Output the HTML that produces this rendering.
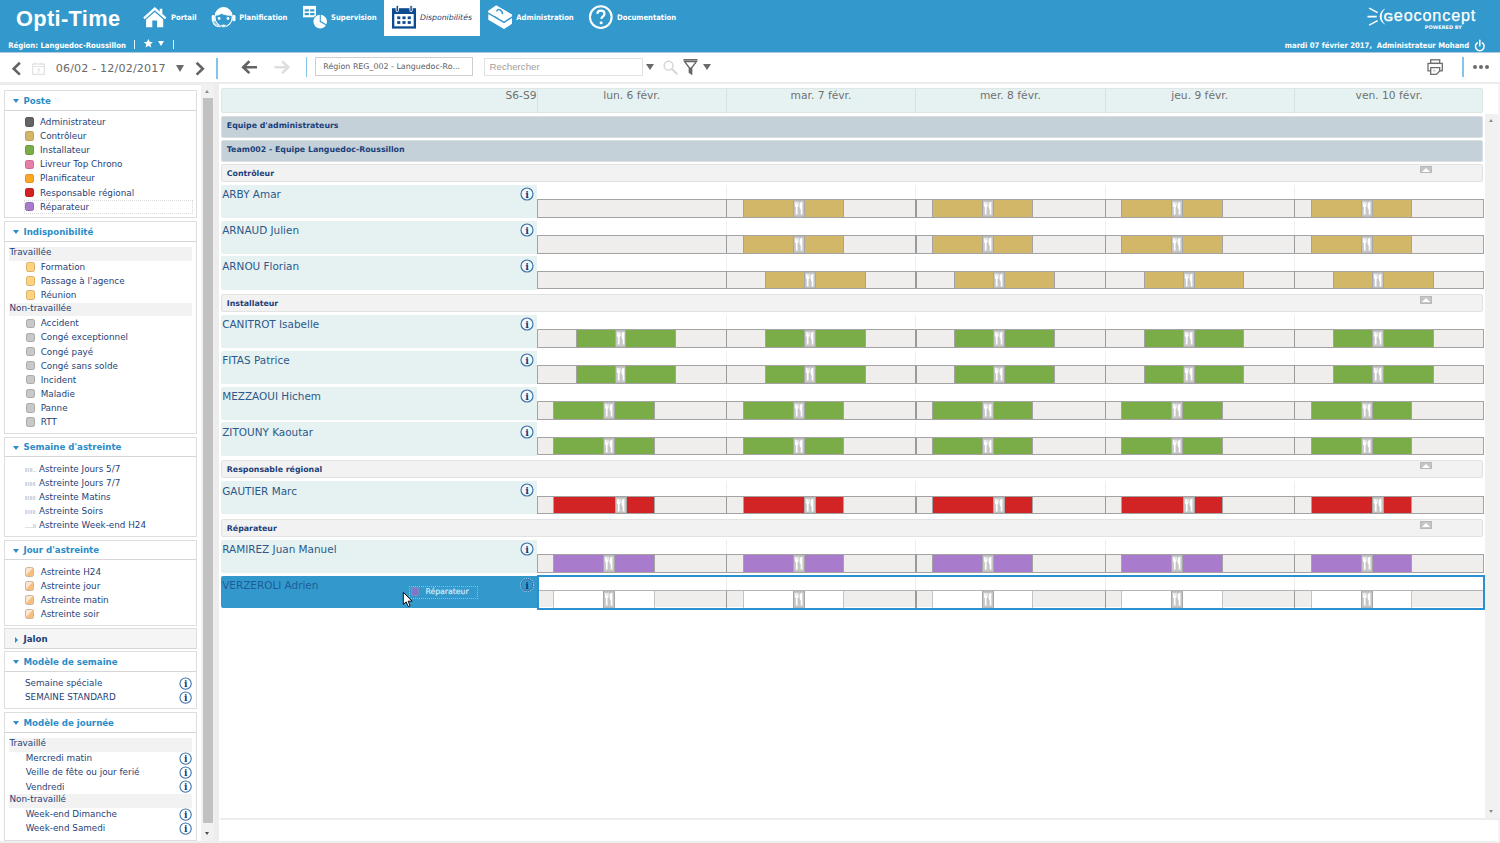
<!DOCTYPE html><html lang="fr"><head><meta charset="utf-8"><title>Opti-Time - Disponibilités</title><style>
*{box-sizing:border-box;margin:0;padding:0}
html,body{width:1500px;height:843px;overflow:hidden;background:#fff}
body{position:relative;font-family:"DejaVu Sans","Liberation Sans",sans-serif;color:#1f3f77}
.abs,.abs *{position:absolute}
div,span,svg,b,i{position:absolute;white-space:pre}
#hdr{left:0;top:0;width:1500px;height:52px;background:#3399cc}
.nav{color:#fff;font-family:'DejaVu Sans Condensed','DejaVu Sans',sans-serif;font-weight:700;font-size:7.62px;line-height:10px;top:12.6px}
.tb{left:0;top:52px;width:1500px;height:31px;background:#fff}
.sep{width:2px;height:21px;top:58px;background:#7fbde0}
.ph{left:4.2px;width:193.1px;height:20.8px;background:#fff;border:1px solid #dedede;border-bottom:1.5px solid #d6d6d6}
.ph b{left:18.3px;top:4.9px;font-size:8.65px;line-height:11px;color:#2b8cc8;font-weight:700}
.ph i{left:8px;top:8px;width:0;height:0;border-left:3px solid transparent;border-right:3px solid transparent;border-top:4px solid #2b8cc8}
.pl{left:4.2px;width:193.1px;background:#fff;border:1px solid #dedede;border-top:0}
.it{left:40px;font-size:8.8px;line-height:12px;color:#1f3f77}
.sw{left:25px;width:8.5px;height:9.6px;border-radius:2.2px}
.band{left:9px;width:183.3px;height:13.7px;background:#f2f2f2}
.band span{left:0.5px;top:-0.6px;font-size:8.8px;line-height:12px;color:#1f3f77}
.grp{left:221.3px;width:1262px;background:#c4d1d9;border-radius:2px;border:1px solid #d9dfe3}
.grp span,.sub span{left:4.5px;font-weight:700;font-size:7.85px;line-height:10px;color:#1c3f7a}
.sub{left:221.3px;width:1262px;height:17.6px;background:#f2f2f2;border:1px solid #e2e2e2;border-radius:2px}
.nm{left:221.2px;width:315.8px;height:33.4px;background:#e6f2f2;border-radius:2px 0 0 2px}
.nm span{left:1px;top:3.7px;font-size:10.45px;line-height:13px;color:#2c588a}
.rw{left:537px;width:947px;height:33.1px;background:#fff}
.dl{width:1px;background:#eeeeee;top:0;height:33.1px}
.bar{left:0;top:14.8px;height:18.4px;width:947px;background:#efeeed;border:1px solid #a3a3a3}
.wk{top:0;height:16.4px;border-left:1px solid #a3a3a3;border-right:1px solid #a3a3a3}
.dv{top:0;height:16.4px;width:1px;background:#a3a3a3}
.dv2{top:0;height:16.4px;width:1.3px;background:#9a9a9a}
.ln{top:0;height:16.4px;background:#c6c6c6;border-left:1.1px solid #a6a6a6;border-right:1.1px solid #a6a6a6;box-shadow:inset 0 1px 0 #bcbcbc,inset 0 -1px 0 #bcbcbc}
</style></head><body>
<div id="hdr">
<span style="left:16px;top:5.5px;font-family:'Liberation Sans',sans-serif;font-size:21.8px;line-height:26px;color:#fff;font-weight:700;letter-spacing:0.35px">Opti-Time</span>
<div style="left:384px;top:0;width:96px;height:35.7px;background:#fff"></div>
<span class="nav" style="left:171px">Portail</span>
<span class="nav" style="left:239.2px">Planification</span>
<span class="nav" style="left:331px">Supervision</span>
<span class="nav" style="left:516.3px">Administration</span>
<span class="nav" style="left:617px">Documentation</span>
<span class="nav" style="left:420px;color:#1c3f7a;font-family:DejaVu Sans,sans-serif;font-style:italic;font-weight:400;font-size:7.73px">Disponibilités</span>
<svg style="left:142px;top:6px" width="26" height="23" viewBox="142 6 26 23"><path d="M154.800 7.100l-11.600 10.300 1.550 1.750 10.050-8.900 10.050 8.900 1.550-1.750-4.100-3.600v-5.100h-2.600v2.800z" fill="#fff"/><path d="M154.800 11.900l-8.700 7.700v7.700h6.200v-6.900h4.800v6.900h6.100v-7.700z" fill="#fff"/></svg>
<svg style="left:210px;top:5px" width="28" height="25" viewBox="210 5 28 25"><ellipse cx="223.6" cy="17.150" rx="8.650" ry="9.600" fill="none" stroke="#fff" stroke-width="1.150"/><path d="M215.100 15.600A8.650 9.600 0 0 1 232.100 15.600C228.500 15.500 224.500 14.900 221.600 13.500C219.500 14.700 217.300 15.400 215.100 15.600Z" fill="#fff" stroke="#fff" stroke-width="0.600"/><circle cx="219.150" cy="18.500" r="1.400" fill="#fff"/><circle cx="228" cy="18.500" r="1.400" fill="#fff"/><rect x="211.700" y="15.100" width="3.100" height="6.200" rx="1.400" fill="#fff"/><rect x="232.400" y="15.100" width="3.100" height="6.200" rx="1.400" fill="#fff"/><path d="M213.200 20.800C213.700 24.300 216.800 26.300 221.300 26.300" fill="none" stroke="#fff" stroke-width="2.100"/><path d="M213.400 21.500C214.100 24.300 216.900 26 221 26.100" fill="none" stroke="#3399cc" stroke-width="0.450"/><ellipse cx="223.500" cy="25.800" rx="2.800" ry="1.500" fill="#fff" stroke="#3399cc" stroke-width="0.700"/></svg>
<svg style="left:302px;top:5px" width="28" height="25" viewBox="302 5 28 25"><rect x="303" y="5.900" width="13" height="11.400" fill="#fff"/><g fill="#3399cc"><rect x="304.7" y="9.300" width="4.200" height="2.200"/><rect x="310.200" y="9.300" width="4.200" height="2.200"/><rect x="304.7" y="13" width="4.200" height="2.200"/><rect x="310.200" y="13" width="4.200" height="2.200"/></g><circle cx="320.2" cy="21.600" r="7.500" fill="#3399cc"/><circle cx="320.2" cy="21.600" r="6.800" fill="#fff"/><path d="M320.3 14.500v7.100l6.200 3.300" fill="none" stroke="#3399cc" stroke-width="1.100"/></svg>
<svg style="left:391px;top:5px" width="26" height="25" viewBox="391 5 26 25"><rect x="392" y="8.200" width="24" height="20.400" fill="#0d4b8f"/><rect x="394.300" y="14" width="19.400" height="12.300" fill="#fff"/><g fill="#0d4b8f"><rect x="397.200" y="16.400" width="3.100" height="2.800"/><rect x="402.450" y="16.400" width="3.100" height="2.800"/><rect x="407.700" y="16.400" width="3.100" height="2.800"/><rect x="397.200" y="21.100" width="3.100" height="2.800"/><rect x="402.450" y="21.100" width="3.100" height="2.800"/><rect x="407.700" y="21.100" width="3.100" height="2.800"/></g><g fill="#0d4b8f" stroke="#fff" stroke-width="0.900"><rect x="396.100" y="5.400" width="2.400" height="6.200" rx="1.200"/><rect x="409.900" y="5.400" width="2.400" height="6.200" rx="1.200"/></g></svg>
<svg style="left:487px;top:4px" width="27" height="27" viewBox="487 4 27 27"><path d="M488 10.900l8.200-5.600 15.900 9.300v1.600l-8.100 5.400-16-9.400z" fill="#fff"/><path d="M488.300 14l15.700 9.300 8-5.300v5.800l-8 5.300-15.700-9.300z" fill="#fff"/><path d="M496.700 11.500c.3-1.900 1.700-2.500 3.300-1.600 1.600 1 2.700 2.500 2.400 4.200" fill="none" stroke="#3399cc" stroke-width="1.500"/><path d="M495 16.500l1.500 1 1.300-.3" fill="none" stroke="#3399cc" stroke-width="0.800"/></svg>
<svg style="left:588px;top:4px" width="26" height="26" viewBox="588 4 26 26"><circle cx="600.8" cy="17.100" r="10.850" fill="none" stroke="#fff" stroke-width="2.100"/><path d="M597.300 13.900c.1-2 1.500-3.300 3.600-3.300 2.100 0 3.600 1.300 3.600 3.100 0 1.400-.7 2.200-1.800 3-1 .7-1.300 1.200-1.300 2.400" fill="none" stroke="#fff" stroke-width="2.200"/><circle cx="601.200" cy="22.800" r="1.550" fill="#fff"/></svg>
<span style="left:8.2px;top:40.6px;font-family:DejaVu Sans Condensed,DejaVu Sans,sans-serif;font-size:7.71px;line-height:10px;font-weight:700;color:#fff">Région: Languedoc-Roussillon</span>
<div style="left:133.8px;top:40px;width:1px;height:8.600px;background:#e6f2fa"></div><div style="left:173.4px;top:40px;width:1px;height:8.600px;background:#e6f2fa"></div>
<svg style="left:143px;top:38px" width="11" height="11" viewBox="143 38 11 11"><path d="M148.4 38.900l1.350 2.900 3.100.35-2.300 2.150.65 3.100-2.800-1.600-2.800 1.600.65-3.100-2.300-2.150 3.100-.35z" fill="#fff"/></svg>
<div style="left:158px;top:41.300px;width:0;height:0;border-left:3.100px solid transparent;border-right:3.100px solid transparent;border-top:5.200px solid #fff"></div>
<span style="left:1284.8px;top:40.700px;font-family:DejaVu Sans Condensed,DejaVu Sans,sans-serif;font-size:7.68px;line-height:10px;font-weight:700;color:#fff">mardi 07 février 2017,  Administrateur Mohand</span>
<svg style="left:1366px;top:6px" width="22" height="22" viewBox="1366 6 22 22"><path d="M1369.200 8.100l8.400 4.500M1367.500 16.600h9.200M1369.200 25.100l8.400-4.500" stroke="#fff" stroke-width="1.600" fill="none"/><path d="M1385.700 8.300c-8 3.500-8 13 0 16.500-5.300-4.300-5.300-12.200 0-16.500z" fill="#fff"/></svg>
<span style="left:1383.800px;top:5.200px;font-family:'Liberation Sans',sans-serif;font-size:16.2px;line-height:20px;color:#fff;letter-spacing:0.85px;-webkit-text-stroke:0.25px #fff"><span style="position:static;font-size:11.8px;-webkit-text-stroke:0.6px #fff">G</span>eoconcept</span>
<span style="left:1424.8px;top:24.3px;font-size:4.95px;line-height:7px;font-weight:700;color:#fff;letter-spacing:0.05px">POWERED BY</span>
<svg style="left:1473px;top:38px" width="14" height="15" viewBox="1473 38 14 15"><path d="M1477.300 42.900a4.300 4.300 0 1 0 5 0" fill="none" stroke="#fff" stroke-width="1.500" stroke-linecap="round"/><path d="M1479.800 40.200v5.600" stroke="#fff" stroke-width="1.500" stroke-linecap="round"/></svg>
</div>
<div class="tb" style="height:30px">
<div style="left:0;top:0;width:1500px;height:1px;background:linear-gradient(#7fb0d0,#d5e3ec)"></div>
<svg style="left:10px;top:8px" width="13" height="17" viewBox="10 60 13 17"><path d="M19.900 62.800l-6.200 5.900 6.200 5.900" fill="none" stroke="#646464" stroke-width="2.600"/></svg>
<svg style="left:194px;top:8px" width="13" height="17" viewBox="194 60 13 17"><path d="M196.600 62.800l6.200 5.900-6.200 5.900" fill="none" stroke="#646464" stroke-width="2.600"/></svg>
<svg style="left:31px;top:9px" width="15" height="15" viewBox="31 61 15 15"><rect x="32.800" y="64" width="11.400" height="10.300" fill="#fff" stroke="#dadada" stroke-width="1"/><path d="M32.800 66.500h11.400" stroke="#e2e2e2" stroke-width="1"/><path d="M35.300 62.600v2M41.700 62.600v2" stroke="#dadada" stroke-width="1"/><text x="38.500" y="73" text-anchor="middle" font-family="DejaVu Sans,sans-serif" font-size="6" fill="#cfcfcf">7</text></svg>
<span style="left:55.700px;top:9.800px;font-size:11.1px;line-height:14px;letter-spacing:0.17px;color:#6a6a6a">06/02 - 12/02/2017</span>
<div style="left:175.8px;top:12.900000000000006px;width:0;height:0;border-left:4.8px solid transparent;border-right:4.8px solid transparent;border-top:7.4px solid #6a6a6a"></div>
<div style="left:645.9px;top:11.600000000000001px;width:0;height:0;border-left:4.6px solid transparent;border-right:4.6px solid transparent;border-top:6.9px solid #6a6a6a"></div>
<div style="left:702.8px;top:11.600000000000001px;width:0;height:0;border-left:4.6px solid transparent;border-right:4.6px solid transparent;border-top:6.9px solid #6a6a6a"></div>
<div style="left:216.300px;top:6.400px;width:1.300px;height:20.300px;background:#86c3ea"></div><div style="left:305.900px;top:5px;width:1.500px;height:20px;background:#86c3ea"></div><div style="left:1462px;top:5.100px;width:1.500px;height:19.800px;background:#86c3ea"></div>
<svg style="left:240px;top:7px" width="19" height="16" viewBox="240 59 19 16"><path d="M257 67.200h-13.600M249.400 61.300l-6.200 5.900 6.200 5.900" fill="none" stroke="#646464" stroke-width="2.600"/></svg>
<svg style="left:273px;top:7px" width="19" height="16" viewBox="273 59 19 16"><path d="M274.500 67.200h13.600M282.100 61.300l6.200 5.900-6.200 5.900" fill="none" stroke="#dedede" stroke-width="2.600"/></svg>
<div style="left:315.300px;top:5.100px;width:158px;height:19.300px;border:1px solid #cfcfcf;background:#fff"><span style="left:7px;top:3.800px;font-size:7.92px;line-height:10px;color:#5e5e5e">Région REG_002 - Languedoc-Ro...</span></div>
<div style="left:484.300px;top:6.300px;width:158.500px;height:18.200px;border:1px solid #e2e2e2;background:#fff"><span style="left:4.300px;top:1.100px;font-family:'Liberation Sans',sans-serif;font-size:9.7px;line-height:13px;color:#a0a0a0">Rechercher</span></div>
<svg style="left:662px;top:7px" width="17" height="17" viewBox="662 59 17 17"><circle cx="668.600" cy="65.700" r="4.400" fill="none" stroke="#d6d6d6" stroke-width="1.500"/><path d="M671.900 69l5 4.700" stroke="#d6d6d6" stroke-width="2" stroke-linecap="round"/></svg>
<svg style="left:682px;top:6px" width="17" height="18" viewBox="682 58 17 18"><path d="M683.500 59.800h14" stroke="#646464" stroke-width="1.500"/><path d="M684.500 61.500h12l-4.800 6.300v6.200l-2.400-1.500v-4.700z" fill="none" stroke="#646464" stroke-width="1.300"/><path d="M689.300 67.500h2.400v6.500l-2.400-1.500z" fill="#646464"/></svg>
<svg style="left:1426px;top:6px" width="19" height="19" viewBox="1426 58 19 19"><g fill="#fff" stroke="#6e6e6e" stroke-width="1.300"><rect x="1430.700" y="59.800" width="9" height="3.600"/><rect x="1428" y="63.400" width="14.300" height="7.400"/><path d="M1430.700 67.700h9v3.300l-3.300 3.400h-5.700z"/></g><path d="M1433 70.800h2.500" stroke="#9a9a9a" stroke-width="0.800"/></svg>
<div style="left:1473.3px;top:13.099999999999994px;width:4px;height:4px;border-radius:2px;background:#6c6c6c"></div>
<div style="left:1479.2px;top:13.099999999999994px;width:4px;height:4px;border-radius:2px;background:#6c6c6c"></div>
<div style="left:1485.1px;top:13.099999999999994px;width:4px;height:4px;border-radius:2px;background:#6c6c6c"></div>
</div>
<div style="left:0;top:82px;width:1500px;height:2.500px;background:#ececec"></div>
<div class="ph" style="top:89.9px"><i></i><b>Poste</b></div>
<div class="pl" style="top:110.7px;height:107.6px"></div>
<div class="sw" style="left:25px;top:117.3px;background:#646464;border:1px solid #555"></div>
<span class="it" style="left:40px;top:116.2px">Administrateur</span>
<div class="sw" style="left:25px;top:131.37px;background:#d2b768;border:1px solid #b9a05a"></div>
<span class="it" style="left:40px;top:130.27px">Contrôleur</span>
<div class="sw" style="left:25px;top:145.44px;background:#7aac47;border:1px solid #6c983f"></div>
<span class="it" style="left:40px;top:144.34px">Installateur</span>
<div class="sw" style="left:25px;top:159.51px;background:#e87ea8;border:1px solid #cc6f94"></div>
<span class="it" style="left:40px;top:158.41px">Livreur Top Chrono</span>
<div class="sw" style="left:25px;top:173.57999999999998px;background:#ffa722;border:1px solid #e0931e"></div>
<span class="it" style="left:40px;top:172.48px">Planificateur</span>
<div class="sw" style="left:25px;top:187.64999999999998px;background:#d42222;border:1px solid #b91e1e"></div>
<span class="it" style="left:40px;top:186.54999999999998px">Responsable régional</span>
<div class="sw" style="left:25px;top:201.72px;background:#a97bcc;border:1px solid #956cb4"></div>
<span class="it" style="left:40px;top:200.62px">Réparateur</span>
<div style="left:24px;top:200px;width:168.5px;height:13.5px;border:1px dotted #dadada"></div>
<div class="ph" style="top:221.3px"><i></i><b>Indisponibilité</b></div>
<div class="pl" style="top:242.1px;height:192.1px"></div>
<div class="band" style="top:247px"><span>Travaillée</span></div>
<div class="sw" style="left:26px;top:262.3px;background:#ffd27f;border:1px solid #d9b36c"></div>
<span class="it" style="left:40.7px;top:261.2px">Formation</span>
<div class="sw" style="left:26px;top:276.35px;background:#ffd27f;border:1px solid #d9b36c"></div>
<span class="it" style="left:40.7px;top:275.25px">Passage à l&#x27;agence</span>
<div class="sw" style="left:26px;top:290.40000000000003px;background:#ffd27f;border:1px solid #d9b36c"></div>
<span class="it" style="left:40.7px;top:289.3px">Réunion</span>
<div class="band" style="top:302.5px"><span>Non-travaillée</span></div>
<div class="sw" style="left:26px;top:318.5px;background:#c8c8c8;border:1px solid #aaaaaa"></div>
<span class="it" style="left:40.7px;top:317.4px">Accident</span>
<div class="sw" style="left:26px;top:332.57px;background:#c8c8c8;border:1px solid #aaaaaa"></div>
<span class="it" style="left:40.7px;top:331.46999999999997px">Congé exceptionnel</span>
<div class="sw" style="left:26px;top:346.64px;background:#c8c8c8;border:1px solid #aaaaaa"></div>
<span class="it" style="left:40.7px;top:345.53999999999996px">Congé payé</span>
<div class="sw" style="left:26px;top:360.71px;background:#c8c8c8;border:1px solid #aaaaaa"></div>
<span class="it" style="left:40.7px;top:359.60999999999996px">Congé sans solde</span>
<div class="sw" style="left:26px;top:374.78px;background:#c8c8c8;border:1px solid #aaaaaa"></div>
<span class="it" style="left:40.7px;top:373.67999999999995px">Incident</span>
<div class="sw" style="left:26px;top:388.85px;background:#c8c8c8;border:1px solid #aaaaaa"></div>
<span class="it" style="left:40.7px;top:387.75px">Maladie</span>
<div class="sw" style="left:26px;top:402.92px;background:#c8c8c8;border:1px solid #aaaaaa"></div>
<span class="it" style="left:40.7px;top:401.82px">Panne</span>
<div class="sw" style="left:26px;top:416.99px;background:#c8c8c8;border:1px solid #aaaaaa"></div>
<span class="it" style="left:40.7px;top:415.89px">RTT</span>
<div class="ph" style="top:436.5px"><i></i><b>Semaine d'astreinte</b></div>
<div class="pl" style="top:457.3px;height:79.8px"></div>
<span class="it" style="left:39px;top:462.9px">Astreinte Jours 5/7</span>
<div style="left:25.2px;top:467.8px;width:7.6px;height:4.1px;background:repeating-linear-gradient(90deg,#d5d9e3 0 1.700px,#eceef3 1.700px 2.700px)"></div>
<div style="left:33px;top:470.9px;width:3px;height:1px;background:#dcdfe8"></div>
<span class="it" style="left:39px;top:476.91999999999996px">Astreinte Jours 7/7</span>
<div style="left:25.2px;top:481.82px;width:10.8px;height:4.1px;background:repeating-linear-gradient(90deg,#d5d9e3 0 1.700px,#eceef3 1.700px 2.700px)"></div>
<span class="it" style="left:39px;top:490.94px">Astreinte Matins</span>
<div style="left:25.2px;top:495.84000000000003px;width:10.8px;height:4.1px;background:repeating-linear-gradient(90deg,#d5d9e3 0 1.700px,#eceef3 1.700px 2.700px)"></div>
<span class="it" style="left:39px;top:504.96px">Astreinte Soirs</span>
<div style="left:25.2px;top:509.86px;width:10.8px;height:4.1px;background:repeating-linear-gradient(90deg,#d5d9e3 0 1.700px,#eceef3 1.700px 2.700px)"></div>
<span class="it" style="left:39px;top:518.98px">Astreinte Week-end H24</span>
<div style="left:25.2px;top:527.1800000000001px;width:8px;height:1px;background:#dfe3ea"></div><div style="left:33.2px;top:524.08px;width:2.8px;height:4.4px;background:linear-gradient(90deg,#d4d8e0 0 45%,#e6e8ee 45% 60%,#d4d8e0 60%)"></div>
<div class="ph" style="top:539.6px"><i></i><b>Jour d'astreinte</b></div>
<div class="pl" style="top:560.4px;height:65.9px"></div>
<div class="sw" style="left:25.1px;top:566.5px;height:10px;width:8.6px;background:linear-gradient(135deg,#fbe6d0 0%,#fbe6d0 44%,#f9bd7e 50%,#f9bd7e 100%);border:1px solid #c9b5a0"></div>
<span class="it" style="left:40.7px;top:565.6999999999999px">Astreinte H24</span>
<div class="sw" style="left:25.1px;top:580.57px;height:10px;width:8.6px;background:linear-gradient(135deg,#fbe6d0 0%,#fbe6d0 44%,#f9bd7e 50%,#f9bd7e 100%);border:1px solid #c9b5a0"></div>
<span class="it" style="left:40.7px;top:579.77px">Astreinte jour</span>
<div class="sw" style="left:25.1px;top:594.64px;height:10px;width:8.6px;background:linear-gradient(135deg,#fbe6d0 0%,#fbe6d0 44%,#f9bd7e 50%,#f9bd7e 100%);border:1px solid #c9b5a0"></div>
<span class="it" style="left:40.7px;top:593.8399999999999px">Astreinte matin</span>
<div class="sw" style="left:25.1px;top:608.71px;height:10px;width:8.6px;background:linear-gradient(135deg,#fbe6d0 0%,#fbe6d0 44%,#f9bd7e 50%,#f9bd7e 100%);border:1px solid #c9b5a0"></div>
<span class="it" style="left:40.7px;top:607.91px">Astreinte soir</span>
<div class="ph" style="top:628.3px;background:#f5f5f5"><i style="border:0;border-top:3px solid transparent;border-bottom:3px solid transparent;border-left:3.600px solid #2b8cc8;left:10.300px;top:7.300px"></i><b style="color:#1c3f7a">Jalon</b></div>
<div class="ph" style="top:651.2px"><i></i><b>Modèle de semaine</b></div>
<div class="pl" style="top:672px;height:36.9px"></div>
<span class="it" style="left:25px;top:677.1999999999999px">Semaine spéciale</span>
<svg style="left:178.70000000000002px;top:677.0999999999999px" width="13.2" height="13.2" viewBox="0 0 14 14"><circle cx="7" cy="7" r="6" fill="rgba(255,255,255,0.45)" stroke="#3a6fa9" stroke-width="1.15"/><text x="7" y="10.75" text-anchor="middle" font-family="DejaVu Serif,Liberation Serif,serif" font-weight="700" font-size="9.6" fill="#0f3c7d">i</text></svg>
<span class="it" style="left:25px;top:691.2499999999999px">SEMAINE STANDARD</span>
<svg style="left:178.70000000000002px;top:691.1499999999999px" width="13.2" height="13.2" viewBox="0 0 14 14"><circle cx="7" cy="7" r="6" fill="rgba(255,255,255,0.45)" stroke="#3a6fa9" stroke-width="1.15"/><text x="7" y="10.75" text-anchor="middle" font-family="DejaVu Serif,Liberation Serif,serif" font-weight="700" font-size="9.6" fill="#0f3c7d">i</text></svg>
<div class="ph" style="top:712.4px"><i></i><b>Modèle de journée</b></div>
<div class="pl" style="top:733.2px;height:108px"></div>
<div class="band" style="top:738px"><span>Travaillé</span></div>
<span class="it" style="left:25.7px;top:752.4px">Mercredi matin</span>
<svg style="left:178.70000000000002px;top:752.1px" width="13.2" height="13.2" viewBox="0 0 14 14"><circle cx="7" cy="7" r="6" fill="rgba(255,255,255,0.45)" stroke="#3a6fa9" stroke-width="1.15"/><text x="7" y="10.75" text-anchor="middle" font-family="DejaVu Serif,Liberation Serif,serif" font-weight="700" font-size="9.6" fill="#0f3c7d">i</text></svg>
<span class="it" style="left:25.7px;top:766.4499999999999px">Veille de fête ou jour ferié</span>
<svg style="left:178.70000000000002px;top:766.15px" width="13.2" height="13.2" viewBox="0 0 14 14"><circle cx="7" cy="7" r="6" fill="rgba(255,255,255,0.45)" stroke="#3a6fa9" stroke-width="1.15"/><text x="7" y="10.75" text-anchor="middle" font-family="DejaVu Serif,Liberation Serif,serif" font-weight="700" font-size="9.6" fill="#0f3c7d">i</text></svg>
<span class="it" style="left:25.7px;top:780.5px">Vendredi</span>
<svg style="left:178.70000000000002px;top:780.2px" width="13.2" height="13.2" viewBox="0 0 14 14"><circle cx="7" cy="7" r="6" fill="rgba(255,255,255,0.45)" stroke="#3a6fa9" stroke-width="1.15"/><text x="7" y="10.75" text-anchor="middle" font-family="DejaVu Serif,Liberation Serif,serif" font-weight="700" font-size="9.6" fill="#0f3c7d">i</text></svg>
<div class="band" style="top:794px"><span>Non-travaillé</span></div>
<span class="it" style="left:25.7px;top:808.4px">Week-end Dimanche</span>
<svg style="left:178.70000000000002px;top:808.1px" width="13.2" height="13.2" viewBox="0 0 14 14"><circle cx="7" cy="7" r="6" fill="rgba(255,255,255,0.45)" stroke="#3a6fa9" stroke-width="1.15"/><text x="7" y="10.75" text-anchor="middle" font-family="DejaVu Serif,Liberation Serif,serif" font-weight="700" font-size="9.6" fill="#0f3c7d">i</text></svg>
<span class="it" style="left:25.7px;top:822.4499999999999px">Week-end Samedi</span>
<svg style="left:178.70000000000002px;top:822.15px" width="13.2" height="13.2" viewBox="0 0 14 14"><circle cx="7" cy="7" r="6" fill="rgba(255,255,255,0.45)" stroke="#3a6fa9" stroke-width="1.15"/><text x="7" y="10.75" text-anchor="middle" font-family="DejaVu Serif,Liberation Serif,serif" font-weight="700" font-size="9.6" fill="#0f3c7d">i</text></svg>
<div style="left:201.2px;top:84px;width:12.7px;height:757px;background:#f1f1f1"></div>
<div style="left:213.9px;top:84px;width:5px;height:757px;background:#ededed"></div>
<div style="left:202.5px;top:97.7px;width:10.2px;height:725px;background:#c1c1c1"></div>
<div style="left:204.7px;top:89.7px;width:0;height:0;border-left:2.8px solid transparent;border-right:2.8px solid transparent;border-bottom:3.3px solid #8c8c8c"></div>
<div style="left:204.7px;top:832px;width:0;height:0;border-left:2.8px solid transparent;border-right:2.8px solid transparent;border-top:3.4px solid #4e4e4e"></div>
<div style="left:0;top:840.9px;width:1500px;height:3px;background:#eeeeee"></div>
<div style="left:218.9px;top:84px;width:1282px;height:756.9px;background:#fff"></div>
<div style="left:221.3px;top:88.2px;width:1262px;height:25.2px;background:#e6f2f2;border:1px solid #dfe6e6;border-radius:2px"></div>
<span style="left:505.5px;top:88.9px;font-size:10.7px;line-height:13px;color:#707070">S6-S9</span>
<div style="left:536.50px;top:89px;width:1px;height:24px;background:#d5e2e2"></div>
<span style="left:537.00px;width:189.35px;text-align:center;top:88.9px;font-size:10.7px;line-height:13px;color:#707070">lun. 6 févr.</span>
<div style="left:725.85px;top:89px;width:1px;height:24px;background:#d5e2e2"></div>
<span style="left:726.35px;width:189.35px;text-align:center;top:88.9px;font-size:10.7px;line-height:13px;color:#707070">mar. 7 févr.</span>
<div style="left:915.20px;top:89px;width:1px;height:24px;background:#d5e2e2"></div>
<span style="left:915.70px;width:189.35px;text-align:center;top:88.9px;font-size:10.7px;line-height:13px;color:#707070">mer. 8 févr.</span>
<div style="left:1104.55px;top:89px;width:1px;height:24px;background:#d5e2e2"></div>
<span style="left:1105.05px;width:189.35px;text-align:center;top:88.9px;font-size:10.7px;line-height:13px;color:#707070">jeu. 9 févr.</span>
<div style="left:1293.90px;top:89px;width:1px;height:24px;background:#d5e2e2"></div>
<span style="left:1294.40px;width:189.35px;text-align:center;top:88.9px;font-size:10.7px;line-height:13px;color:#707070">ven. 10 févr.</span>
<div class="grp" style="top:116px;height:21.5px"><span style="top:4px">Equipe d'administrateurs</span></div>
<div class="grp" style="top:140px;height:22px"><span style="top:4px">Team002 - Equipe Languedoc-Roussillon</span></div>
<div style="left:1485.1px;top:113.9px;width:13.2px;height:704.3px;background:#f1f1f1"></div>
<div style="left:1498.3px;top:84px;width:1.7px;height:757px;background:#f4f4f4"></div>
<div style="left:1489.1px;top:119.4px;width:0;height:0;border-left:2.8px solid transparent;border-right:2.8px solid transparent;border-bottom:3.3px solid #8f8f8f"></div>
<div style="left:1489.1px;top:809.5px;width:0;height:0;border-left:2.8px solid transparent;border-right:2.8px solid transparent;border-top:3.3px solid #8f8f8f"></div>
<div style="left:219.9px;top:818.2px;width:1281px;height:2px;background:#ededed"></div>
<div class="sub" style="top:164.2px"><span style="top:4.1px">Contrôleur</span><div style="left:1197.5px;top:0.7px;width:12.5px;height:7.6px;background:#c6c6c6;border:1px solid #b8b8b8"><i style="left:1px;top:0.8px;width:0;height:0;border-left:4.2px solid transparent;border-right:4.2px solid transparent;border-bottom:4.2px solid #fff"></i></div></div>
<div class="nm" style="top:184.5px;background:#e6f2f2"><span>ARBY Amar</span></div>
<div class="rw" style="top:184.5px">
<div class="dl" style="left:188.85px"></div>
<div class="dl" style="left:378.20px"></div>
<div class="dl" style="left:567.55px"></div>
<div class="dl" style="left:756.90px"></div>
<div class="bar">
<div class="dv2" style="left:188.05px"></div>
<div class="wk" style="left:204.75px;width:101.30px;background:#d2b768"></div>
<div class="ln" style="left:254.65px;width:12.10px"><svg style="left:0;top:0" width="10.2" height="16.4" viewBox="0 0 10.2 16.4"><path d="M0.85 1.9h0.9v2.6h0.5v-2.6h0.9v2.6h0.5v-2.6h0.9v3.4c0 1-.5 1.600-1 1.900v7.400h-1.700v-7.400c-.5-.3-1-.9-1-1.900z" fill="#fff"/><path d="M8.400 1.900v12.700h-1.700v-5.100c-.7-.6-1.100-1.500-1.100-2.900v-2.300c0-1.400.9-2.300 2-2.400z" fill="#fff"/></svg></div>
<div class="dv2" style="left:377.40px"></div>
<div class="wk" style="left:394.10px;width:101.30px;background:#d2b768"></div>
<div class="ln" style="left:444.00px;width:12.10px"><svg style="left:0;top:0" width="10.2" height="16.4" viewBox="0 0 10.2 16.4"><path d="M0.85 1.9h0.9v2.6h0.5v-2.6h0.9v2.6h0.5v-2.6h0.9v3.4c0 1-.5 1.600-1 1.900v7.400h-1.700v-7.400c-.5-.3-1-.9-1-1.900z" fill="#fff"/><path d="M8.400 1.900v12.700h-1.700v-5.100c-.7-.6-1.100-1.500-1.100-2.900v-2.300c0-1.400.9-2.300 2-2.400z" fill="#fff"/></svg></div>
<div class="dv2" style="left:566.75px"></div>
<div class="wk" style="left:583.45px;width:101.30px;background:#d2b768"></div>
<div class="ln" style="left:633.35px;width:12.10px"><svg style="left:0;top:0" width="10.2" height="16.4" viewBox="0 0 10.2 16.4"><path d="M0.85 1.9h0.9v2.6h0.5v-2.6h0.9v2.6h0.5v-2.6h0.9v3.4c0 1-.5 1.600-1 1.900v7.400h-1.700v-7.400c-.5-.3-1-.9-1-1.900z" fill="#fff"/><path d="M8.400 1.900v12.700h-1.700v-5.100c-.7-.6-1.100-1.500-1.100-2.900v-2.300c0-1.400.9-2.300 2-2.400z" fill="#fff"/></svg></div>
<div class="dv2" style="left:756.10px"></div>
<div class="wk" style="left:772.80px;width:101.30px;background:#d2b768"></div>
<div class="ln" style="left:822.70px;width:12.10px"><svg style="left:0;top:0" width="10.2" height="16.4" viewBox="0 0 10.2 16.4"><path d="M0.85 1.9h0.9v2.6h0.5v-2.6h0.9v2.6h0.5v-2.6h0.9v3.4c0 1-.5 1.600-1 1.900v7.400h-1.700v-7.400c-.5-.3-1-.9-1-1.900z" fill="#fff"/><path d="M8.400 1.900v12.700h-1.700v-5.100c-.7-.6-1.100-1.500-1.100-2.900v-2.300c0-1.400.9-2.300 2-2.400z" fill="#fff"/></svg></div>
</div></div>
<svg style="left:520.4px;top:186.8px" width="14" height="14" viewBox="0 0 14 14"><circle cx="7" cy="7" r="6" fill="rgba(255,255,255,0.45)" stroke="#3a6fa9" stroke-width="1.15"/><text x="7" y="10.75" text-anchor="middle" font-family="DejaVu Serif,Liberation Serif,serif" font-weight="700" font-size="9.6" fill="#0f3c7d">i</text></svg>
<div class="nm" style="top:220.5px;background:#e6f2f2"><span>ARNAUD Julien</span></div>
<div class="rw" style="top:220.5px">
<div class="dl" style="left:188.85px"></div>
<div class="dl" style="left:378.20px"></div>
<div class="dl" style="left:567.55px"></div>
<div class="dl" style="left:756.90px"></div>
<div class="bar">
<div class="dv2" style="left:188.05px"></div>
<div class="wk" style="left:204.75px;width:101.30px;background:#d2b768"></div>
<div class="ln" style="left:254.65px;width:12.10px"><svg style="left:0;top:0" width="10.2" height="16.4" viewBox="0 0 10.2 16.4"><path d="M0.85 1.9h0.9v2.6h0.5v-2.6h0.9v2.6h0.5v-2.6h0.9v3.4c0 1-.5 1.600-1 1.900v7.400h-1.700v-7.400c-.5-.3-1-.9-1-1.900z" fill="#fff"/><path d="M8.400 1.900v12.700h-1.700v-5.100c-.7-.6-1.100-1.500-1.100-2.900v-2.300c0-1.400.9-2.300 2-2.400z" fill="#fff"/></svg></div>
<div class="dv2" style="left:377.40px"></div>
<div class="wk" style="left:394.10px;width:101.30px;background:#d2b768"></div>
<div class="ln" style="left:444.00px;width:12.10px"><svg style="left:0;top:0" width="10.2" height="16.4" viewBox="0 0 10.2 16.4"><path d="M0.85 1.9h0.9v2.6h0.5v-2.6h0.9v2.6h0.5v-2.6h0.9v3.4c0 1-.5 1.600-1 1.900v7.400h-1.700v-7.400c-.5-.3-1-.9-1-1.900z" fill="#fff"/><path d="M8.400 1.900v12.700h-1.700v-5.100c-.7-.6-1.100-1.500-1.100-2.900v-2.300c0-1.400.9-2.300 2-2.400z" fill="#fff"/></svg></div>
<div class="dv2" style="left:566.75px"></div>
<div class="wk" style="left:583.45px;width:101.30px;background:#d2b768"></div>
<div class="ln" style="left:633.35px;width:12.10px"><svg style="left:0;top:0" width="10.2" height="16.4" viewBox="0 0 10.2 16.4"><path d="M0.85 1.9h0.9v2.6h0.5v-2.6h0.9v2.6h0.5v-2.6h0.9v3.4c0 1-.5 1.600-1 1.900v7.400h-1.700v-7.400c-.5-.3-1-.9-1-1.900z" fill="#fff"/><path d="M8.400 1.900v12.700h-1.700v-5.100c-.7-.6-1.100-1.500-1.100-2.900v-2.300c0-1.400.9-2.300 2-2.400z" fill="#fff"/></svg></div>
<div class="dv2" style="left:756.10px"></div>
<div class="wk" style="left:772.80px;width:101.30px;background:#d2b768"></div>
<div class="ln" style="left:822.70px;width:12.10px"><svg style="left:0;top:0" width="10.2" height="16.4" viewBox="0 0 10.2 16.4"><path d="M0.85 1.9h0.9v2.6h0.5v-2.6h0.9v2.6h0.5v-2.6h0.9v3.4c0 1-.5 1.600-1 1.900v7.400h-1.700v-7.400c-.5-.3-1-.9-1-1.900z" fill="#fff"/><path d="M8.400 1.900v12.700h-1.700v-5.100c-.7-.6-1.100-1.500-1.100-2.900v-2.300c0-1.400.9-2.300 2-2.400z" fill="#fff"/></svg></div>
</div></div>
<svg style="left:520.4px;top:222.8px" width="14" height="14" viewBox="0 0 14 14"><circle cx="7" cy="7" r="6" fill="rgba(255,255,255,0.45)" stroke="#3a6fa9" stroke-width="1.15"/><text x="7" y="10.75" text-anchor="middle" font-family="DejaVu Serif,Liberation Serif,serif" font-weight="700" font-size="9.6" fill="#0f3c7d">i</text></svg>
<div class="nm" style="top:256.3px;background:#e6f2f2"><span>ARNOU Florian</span></div>
<div class="rw" style="top:256.3px">
<div class="dl" style="left:188.85px"></div>
<div class="dl" style="left:378.20px"></div>
<div class="dl" style="left:567.55px"></div>
<div class="dl" style="left:756.90px"></div>
<div class="bar">
<div class="dv2" style="left:188.05px"></div>
<div class="wk" style="left:226.85px;width:100.80px;background:#d2b768"></div>
<div class="ln" style="left:266.05px;width:11.80px"><svg style="left:0;top:0" width="10.2" height="16.4" viewBox="0 0 10.2 16.4"><path d="M0.85 1.9h0.9v2.6h0.5v-2.6h0.9v2.6h0.5v-2.6h0.9v3.4c0 1-.5 1.600-1 1.900v7.400h-1.700v-7.400c-.5-.3-1-.9-1-1.900z" fill="#fff"/><path d="M8.400 1.900v12.700h-1.700v-5.100c-.7-.6-1.100-1.500-1.100-2.900v-2.300c0-1.400.9-2.300 2-2.400z" fill="#fff"/></svg></div>
<div class="dv2" style="left:377.40px"></div>
<div class="wk" style="left:416.20px;width:100.80px;background:#d2b768"></div>
<div class="ln" style="left:455.40px;width:11.80px"><svg style="left:0;top:0" width="10.2" height="16.4" viewBox="0 0 10.2 16.4"><path d="M0.85 1.9h0.9v2.6h0.5v-2.6h0.9v2.6h0.5v-2.6h0.9v3.4c0 1-.5 1.600-1 1.900v7.400h-1.700v-7.400c-.5-.3-1-.9-1-1.900z" fill="#fff"/><path d="M8.400 1.900v12.700h-1.700v-5.100c-.7-.6-1.100-1.500-1.100-2.900v-2.300c0-1.400.9-2.300 2-2.400z" fill="#fff"/></svg></div>
<div class="dv2" style="left:566.75px"></div>
<div class="wk" style="left:605.55px;width:100.80px;background:#d2b768"></div>
<div class="ln" style="left:644.75px;width:11.80px"><svg style="left:0;top:0" width="10.2" height="16.4" viewBox="0 0 10.2 16.4"><path d="M0.85 1.9h0.9v2.6h0.5v-2.6h0.9v2.6h0.5v-2.6h0.9v3.4c0 1-.5 1.600-1 1.900v7.400h-1.700v-7.400c-.5-.3-1-.9-1-1.900z" fill="#fff"/><path d="M8.400 1.900v12.700h-1.700v-5.100c-.7-.6-1.100-1.500-1.100-2.900v-2.300c0-1.400.9-2.300 2-2.400z" fill="#fff"/></svg></div>
<div class="dv2" style="left:756.10px"></div>
<div class="wk" style="left:794.90px;width:100.80px;background:#d2b768"></div>
<div class="ln" style="left:834.10px;width:11.80px"><svg style="left:0;top:0" width="10.2" height="16.4" viewBox="0 0 10.2 16.4"><path d="M0.85 1.9h0.9v2.6h0.5v-2.6h0.9v2.6h0.5v-2.6h0.9v3.4c0 1-.5 1.600-1 1.900v7.400h-1.700v-7.400c-.5-.3-1-.9-1-1.900z" fill="#fff"/><path d="M8.400 1.900v12.700h-1.700v-5.100c-.7-.6-1.100-1.500-1.100-2.900v-2.300c0-1.400.9-2.300 2-2.400z" fill="#fff"/></svg></div>
</div></div>
<svg style="left:520.4px;top:258.6px" width="14" height="14" viewBox="0 0 14 14"><circle cx="7" cy="7" r="6" fill="rgba(255,255,255,0.45)" stroke="#3a6fa9" stroke-width="1.15"/><text x="7" y="10.75" text-anchor="middle" font-family="DejaVu Serif,Liberation Serif,serif" font-weight="700" font-size="9.6" fill="#0f3c7d">i</text></svg>
<div class="sub" style="top:294.3px"><span style="top:4.1px">Installateur</span><div style="left:1197.5px;top:0.7px;width:12.5px;height:7.6px;background:#c6c6c6;border:1px solid #b8b8b8"><i style="left:1px;top:0.8px;width:0;height:0;border-left:4.2px solid transparent;border-right:4.2px solid transparent;border-bottom:4.2px solid #fff"></i></div></div>
<div class="nm" style="top:314.7px;background:#e6f2f2"><span>CANITROT Isabelle</span></div>
<div class="rw" style="top:314.7px">
<div class="dl" style="left:188.85px"></div>
<div class="dl" style="left:378.20px"></div>
<div class="dl" style="left:567.55px"></div>
<div class="dl" style="left:756.90px"></div>
<div class="bar">
<div class="wk" style="left:37.50px;width:100.80px;background:#7aac47"></div>
<div class="ln" style="left:76.70px;width:11.80px"><svg style="left:0;top:0" width="10.2" height="16.4" viewBox="0 0 10.2 16.4"><path d="M0.85 1.9h0.9v2.6h0.5v-2.6h0.9v2.6h0.5v-2.6h0.9v3.4c0 1-.5 1.600-1 1.900v7.400h-1.700v-7.400c-.5-.3-1-.9-1-1.900z" fill="#fff"/><path d="M8.400 1.900v12.700h-1.700v-5.100c-.7-.6-1.100-1.500-1.100-2.900v-2.300c0-1.400.9-2.300 2-2.400z" fill="#fff"/></svg></div>
<div class="dv2" style="left:188.05px"></div>
<div class="wk" style="left:226.85px;width:100.80px;background:#7aac47"></div>
<div class="ln" style="left:266.05px;width:11.80px"><svg style="left:0;top:0" width="10.2" height="16.4" viewBox="0 0 10.2 16.4"><path d="M0.85 1.9h0.9v2.6h0.5v-2.6h0.9v2.6h0.5v-2.6h0.9v3.4c0 1-.5 1.600-1 1.900v7.400h-1.700v-7.400c-.5-.3-1-.9-1-1.900z" fill="#fff"/><path d="M8.400 1.900v12.700h-1.700v-5.100c-.7-.6-1.100-1.500-1.100-2.900v-2.300c0-1.400.9-2.300 2-2.400z" fill="#fff"/></svg></div>
<div class="dv2" style="left:377.40px"></div>
<div class="wk" style="left:416.20px;width:100.80px;background:#7aac47"></div>
<div class="ln" style="left:455.40px;width:11.80px"><svg style="left:0;top:0" width="10.2" height="16.4" viewBox="0 0 10.2 16.4"><path d="M0.85 1.9h0.9v2.6h0.5v-2.6h0.9v2.6h0.5v-2.6h0.9v3.4c0 1-.5 1.600-1 1.900v7.400h-1.700v-7.400c-.5-.3-1-.9-1-1.900z" fill="#fff"/><path d="M8.400 1.900v12.700h-1.700v-5.100c-.7-.6-1.100-1.500-1.100-2.900v-2.300c0-1.400.9-2.300 2-2.400z" fill="#fff"/></svg></div>
<div class="dv2" style="left:566.75px"></div>
<div class="wk" style="left:605.55px;width:100.80px;background:#7aac47"></div>
<div class="ln" style="left:644.75px;width:11.80px"><svg style="left:0;top:0" width="10.2" height="16.4" viewBox="0 0 10.2 16.4"><path d="M0.85 1.9h0.9v2.6h0.5v-2.6h0.9v2.6h0.5v-2.6h0.9v3.4c0 1-.5 1.600-1 1.900v7.400h-1.700v-7.400c-.5-.3-1-.9-1-1.900z" fill="#fff"/><path d="M8.400 1.900v12.700h-1.700v-5.100c-.7-.6-1.100-1.500-1.100-2.900v-2.300c0-1.400.9-2.300 2-2.400z" fill="#fff"/></svg></div>
<div class="dv2" style="left:756.10px"></div>
<div class="wk" style="left:794.90px;width:100.80px;background:#7aac47"></div>
<div class="ln" style="left:834.10px;width:11.80px"><svg style="left:0;top:0" width="10.2" height="16.4" viewBox="0 0 10.2 16.4"><path d="M0.85 1.9h0.9v2.6h0.5v-2.6h0.9v2.6h0.5v-2.6h0.9v3.4c0 1-.5 1.600-1 1.900v7.400h-1.700v-7.400c-.5-.3-1-.9-1-1.900z" fill="#fff"/><path d="M8.400 1.900v12.700h-1.700v-5.100c-.7-.6-1.100-1.500-1.100-2.900v-2.300c0-1.400.9-2.300 2-2.400z" fill="#fff"/></svg></div>
</div></div>
<svg style="left:520.4px;top:317.0px" width="14" height="14" viewBox="0 0 14 14"><circle cx="7" cy="7" r="6" fill="rgba(255,255,255,0.45)" stroke="#3a6fa9" stroke-width="1.15"/><text x="7" y="10.75" text-anchor="middle" font-family="DejaVu Serif,Liberation Serif,serif" font-weight="700" font-size="9.6" fill="#0f3c7d">i</text></svg>
<div class="nm" style="top:350.6px;background:#e6f2f2"><span>FITAS Patrice</span></div>
<div class="rw" style="top:350.6px">
<div class="dl" style="left:188.85px"></div>
<div class="dl" style="left:378.20px"></div>
<div class="dl" style="left:567.55px"></div>
<div class="dl" style="left:756.90px"></div>
<div class="bar">
<div class="wk" style="left:37.50px;width:100.80px;background:#7aac47"></div>
<div class="ln" style="left:76.70px;width:11.80px"><svg style="left:0;top:0" width="10.2" height="16.4" viewBox="0 0 10.2 16.4"><path d="M0.85 1.9h0.9v2.6h0.5v-2.6h0.9v2.6h0.5v-2.6h0.9v3.4c0 1-.5 1.600-1 1.900v7.400h-1.700v-7.400c-.5-.3-1-.9-1-1.900z" fill="#fff"/><path d="M8.400 1.900v12.700h-1.700v-5.100c-.7-.6-1.100-1.500-1.100-2.900v-2.300c0-1.400.9-2.300 2-2.400z" fill="#fff"/></svg></div>
<div class="dv2" style="left:188.05px"></div>
<div class="wk" style="left:226.85px;width:100.80px;background:#7aac47"></div>
<div class="ln" style="left:266.05px;width:11.80px"><svg style="left:0;top:0" width="10.2" height="16.4" viewBox="0 0 10.2 16.4"><path d="M0.85 1.9h0.9v2.6h0.5v-2.6h0.9v2.6h0.5v-2.6h0.9v3.4c0 1-.5 1.600-1 1.900v7.400h-1.700v-7.400c-.5-.3-1-.9-1-1.900z" fill="#fff"/><path d="M8.400 1.900v12.700h-1.700v-5.100c-.7-.6-1.100-1.500-1.100-2.900v-2.300c0-1.400.9-2.300 2-2.400z" fill="#fff"/></svg></div>
<div class="dv2" style="left:377.40px"></div>
<div class="wk" style="left:416.20px;width:100.80px;background:#7aac47"></div>
<div class="ln" style="left:455.40px;width:11.80px"><svg style="left:0;top:0" width="10.2" height="16.4" viewBox="0 0 10.2 16.4"><path d="M0.85 1.9h0.9v2.6h0.5v-2.6h0.9v2.6h0.5v-2.6h0.9v3.4c0 1-.5 1.600-1 1.900v7.400h-1.700v-7.400c-.5-.3-1-.9-1-1.900z" fill="#fff"/><path d="M8.400 1.900v12.700h-1.700v-5.100c-.7-.6-1.100-1.500-1.100-2.900v-2.300c0-1.400.9-2.300 2-2.400z" fill="#fff"/></svg></div>
<div class="dv2" style="left:566.75px"></div>
<div class="wk" style="left:605.55px;width:100.80px;background:#7aac47"></div>
<div class="ln" style="left:644.75px;width:11.80px"><svg style="left:0;top:0" width="10.2" height="16.4" viewBox="0 0 10.2 16.4"><path d="M0.85 1.9h0.9v2.6h0.5v-2.6h0.9v2.6h0.5v-2.6h0.9v3.4c0 1-.5 1.600-1 1.900v7.400h-1.700v-7.400c-.5-.3-1-.9-1-1.900z" fill="#fff"/><path d="M8.400 1.900v12.700h-1.700v-5.100c-.7-.6-1.100-1.500-1.100-2.900v-2.300c0-1.400.9-2.300 2-2.400z" fill="#fff"/></svg></div>
<div class="dv2" style="left:756.10px"></div>
<div class="wk" style="left:794.90px;width:100.80px;background:#7aac47"></div>
<div class="ln" style="left:834.10px;width:11.80px"><svg style="left:0;top:0" width="10.2" height="16.4" viewBox="0 0 10.2 16.4"><path d="M0.85 1.9h0.9v2.6h0.5v-2.6h0.9v2.6h0.5v-2.6h0.9v3.4c0 1-.5 1.600-1 1.900v7.400h-1.700v-7.400c-.5-.3-1-.9-1-1.900z" fill="#fff"/><path d="M8.400 1.900v12.700h-1.700v-5.100c-.7-.6-1.100-1.500-1.100-2.900v-2.300c0-1.400.9-2.300 2-2.400z" fill="#fff"/></svg></div>
</div></div>
<svg style="left:520.4px;top:352.90000000000003px" width="14" height="14" viewBox="0 0 14 14"><circle cx="7" cy="7" r="6" fill="rgba(255,255,255,0.45)" stroke="#3a6fa9" stroke-width="1.15"/><text x="7" y="10.75" text-anchor="middle" font-family="DejaVu Serif,Liberation Serif,serif" font-weight="700" font-size="9.6" fill="#0f3c7d">i</text></svg>
<div class="nm" style="top:386.5px;background:#e6f2f2"><span>MEZZAOUI Hichem</span></div>
<div class="rw" style="top:386.5px">
<div class="dl" style="left:188.85px"></div>
<div class="dl" style="left:378.20px"></div>
<div class="dl" style="left:567.55px"></div>
<div class="dl" style="left:756.90px"></div>
<div class="bar">
<div class="wk" style="left:15.40px;width:101.30px;background:#7aac47"></div>
<div class="ln" style="left:65.30px;width:12.10px"><svg style="left:0;top:0" width="10.2" height="16.4" viewBox="0 0 10.2 16.4"><path d="M0.85 1.9h0.9v2.6h0.5v-2.6h0.9v2.6h0.5v-2.6h0.9v3.4c0 1-.5 1.600-1 1.900v7.400h-1.700v-7.400c-.5-.3-1-.9-1-1.900z" fill="#fff"/><path d="M8.400 1.900v12.700h-1.700v-5.100c-.7-.6-1.100-1.500-1.100-2.900v-2.300c0-1.400.9-2.300 2-2.400z" fill="#fff"/></svg></div>
<div class="dv2" style="left:188.05px"></div>
<div class="wk" style="left:204.75px;width:101.30px;background:#7aac47"></div>
<div class="ln" style="left:254.65px;width:12.10px"><svg style="left:0;top:0" width="10.2" height="16.4" viewBox="0 0 10.2 16.4"><path d="M0.85 1.9h0.9v2.6h0.5v-2.6h0.9v2.6h0.5v-2.6h0.9v3.4c0 1-.5 1.600-1 1.900v7.400h-1.700v-7.400c-.5-.3-1-.9-1-1.900z" fill="#fff"/><path d="M8.400 1.900v12.700h-1.700v-5.100c-.7-.6-1.100-1.500-1.100-2.900v-2.300c0-1.400.9-2.300 2-2.400z" fill="#fff"/></svg></div>
<div class="dv2" style="left:377.40px"></div>
<div class="wk" style="left:394.10px;width:101.30px;background:#7aac47"></div>
<div class="ln" style="left:444.00px;width:12.10px"><svg style="left:0;top:0" width="10.2" height="16.4" viewBox="0 0 10.2 16.4"><path d="M0.85 1.9h0.9v2.6h0.5v-2.6h0.9v2.6h0.5v-2.6h0.9v3.4c0 1-.5 1.600-1 1.900v7.400h-1.700v-7.400c-.5-.3-1-.9-1-1.900z" fill="#fff"/><path d="M8.400 1.900v12.700h-1.700v-5.100c-.7-.6-1.100-1.500-1.100-2.900v-2.300c0-1.400.9-2.300 2-2.400z" fill="#fff"/></svg></div>
<div class="dv2" style="left:566.75px"></div>
<div class="wk" style="left:583.45px;width:101.30px;background:#7aac47"></div>
<div class="ln" style="left:633.35px;width:12.10px"><svg style="left:0;top:0" width="10.2" height="16.4" viewBox="0 0 10.2 16.4"><path d="M0.85 1.9h0.9v2.6h0.5v-2.6h0.9v2.6h0.5v-2.6h0.9v3.4c0 1-.5 1.600-1 1.900v7.400h-1.700v-7.400c-.5-.3-1-.9-1-1.900z" fill="#fff"/><path d="M8.400 1.900v12.700h-1.700v-5.100c-.7-.6-1.100-1.500-1.100-2.900v-2.300c0-1.400.9-2.300 2-2.400z" fill="#fff"/></svg></div>
<div class="dv2" style="left:756.10px"></div>
<div class="wk" style="left:772.80px;width:101.30px;background:#7aac47"></div>
<div class="ln" style="left:822.70px;width:12.10px"><svg style="left:0;top:0" width="10.2" height="16.4" viewBox="0 0 10.2 16.4"><path d="M0.85 1.9h0.9v2.6h0.5v-2.6h0.9v2.6h0.5v-2.6h0.9v3.4c0 1-.5 1.600-1 1.900v7.400h-1.700v-7.400c-.5-.3-1-.9-1-1.900z" fill="#fff"/><path d="M8.400 1.900v12.700h-1.700v-5.100c-.7-.6-1.100-1.500-1.100-2.900v-2.300c0-1.400.9-2.300 2-2.400z" fill="#fff"/></svg></div>
</div></div>
<svg style="left:520.4px;top:388.8px" width="14" height="14" viewBox="0 0 14 14"><circle cx="7" cy="7" r="6" fill="rgba(255,255,255,0.45)" stroke="#3a6fa9" stroke-width="1.15"/><text x="7" y="10.75" text-anchor="middle" font-family="DejaVu Serif,Liberation Serif,serif" font-weight="700" font-size="9.6" fill="#0f3c7d">i</text></svg>
<div class="nm" style="top:422.3px;background:#e6f2f2"><span>ZITOUNY Kaoutar</span></div>
<div class="rw" style="top:422.3px">
<div class="dl" style="left:188.85px"></div>
<div class="dl" style="left:378.20px"></div>
<div class="dl" style="left:567.55px"></div>
<div class="dl" style="left:756.90px"></div>
<div class="bar">
<div class="wk" style="left:15.40px;width:101.30px;background:#7aac47"></div>
<div class="ln" style="left:65.30px;width:12.10px"><svg style="left:0;top:0" width="10.2" height="16.4" viewBox="0 0 10.2 16.4"><path d="M0.85 1.9h0.9v2.6h0.5v-2.6h0.9v2.6h0.5v-2.6h0.9v3.4c0 1-.5 1.600-1 1.900v7.400h-1.700v-7.400c-.5-.3-1-.9-1-1.900z" fill="#fff"/><path d="M8.400 1.900v12.700h-1.700v-5.100c-.7-.6-1.100-1.500-1.100-2.900v-2.300c0-1.400.9-2.300 2-2.400z" fill="#fff"/></svg></div>
<div class="dv2" style="left:188.05px"></div>
<div class="wk" style="left:204.75px;width:101.30px;background:#7aac47"></div>
<div class="ln" style="left:254.65px;width:12.10px"><svg style="left:0;top:0" width="10.2" height="16.4" viewBox="0 0 10.2 16.4"><path d="M0.85 1.9h0.9v2.6h0.5v-2.6h0.9v2.6h0.5v-2.6h0.9v3.4c0 1-.5 1.600-1 1.900v7.400h-1.700v-7.400c-.5-.3-1-.9-1-1.900z" fill="#fff"/><path d="M8.400 1.900v12.700h-1.700v-5.100c-.7-.6-1.100-1.500-1.100-2.900v-2.300c0-1.400.9-2.300 2-2.400z" fill="#fff"/></svg></div>
<div class="dv2" style="left:377.40px"></div>
<div class="wk" style="left:394.10px;width:101.30px;background:#7aac47"></div>
<div class="ln" style="left:444.00px;width:12.10px"><svg style="left:0;top:0" width="10.2" height="16.4" viewBox="0 0 10.2 16.4"><path d="M0.85 1.9h0.9v2.6h0.5v-2.6h0.9v2.6h0.5v-2.6h0.9v3.4c0 1-.5 1.600-1 1.900v7.400h-1.700v-7.400c-.5-.3-1-.9-1-1.900z" fill="#fff"/><path d="M8.400 1.900v12.700h-1.700v-5.100c-.7-.6-1.100-1.500-1.100-2.900v-2.300c0-1.400.9-2.300 2-2.400z" fill="#fff"/></svg></div>
<div class="dv2" style="left:566.75px"></div>
<div class="wk" style="left:583.45px;width:101.30px;background:#7aac47"></div>
<div class="ln" style="left:633.35px;width:12.10px"><svg style="left:0;top:0" width="10.2" height="16.4" viewBox="0 0 10.2 16.4"><path d="M0.85 1.9h0.9v2.6h0.5v-2.6h0.9v2.6h0.5v-2.6h0.9v3.4c0 1-.5 1.600-1 1.900v7.400h-1.700v-7.400c-.5-.3-1-.9-1-1.900z" fill="#fff"/><path d="M8.400 1.900v12.700h-1.700v-5.100c-.7-.6-1.100-1.500-1.100-2.900v-2.300c0-1.400.9-2.300 2-2.400z" fill="#fff"/></svg></div>
<div class="dv2" style="left:756.10px"></div>
<div class="wk" style="left:772.80px;width:101.30px;background:#7aac47"></div>
<div class="ln" style="left:822.70px;width:12.10px"><svg style="left:0;top:0" width="10.2" height="16.4" viewBox="0 0 10.2 16.4"><path d="M0.85 1.9h0.9v2.6h0.5v-2.6h0.9v2.6h0.5v-2.6h0.9v3.4c0 1-.5 1.600-1 1.900v7.400h-1.700v-7.400c-.5-.3-1-.9-1-1.900z" fill="#fff"/><path d="M8.400 1.900v12.700h-1.700v-5.100c-.7-.6-1.100-1.500-1.100-2.900v-2.300c0-1.400.9-2.300 2-2.400z" fill="#fff"/></svg></div>
</div></div>
<svg style="left:520.4px;top:424.6px" width="14" height="14" viewBox="0 0 14 14"><circle cx="7" cy="7" r="6" fill="rgba(255,255,255,0.45)" stroke="#3a6fa9" stroke-width="1.15"/><text x="7" y="10.75" text-anchor="middle" font-family="DejaVu Serif,Liberation Serif,serif" font-weight="700" font-size="9.6" fill="#0f3c7d">i</text></svg>
<div class="sub" style="top:460.2px"><span style="top:4.1px">Responsable régional</span><div style="left:1197.5px;top:0.7px;width:12.5px;height:7.6px;background:#c6c6c6;border:1px solid #b8b8b8"><i style="left:1px;top:0.8px;width:0;height:0;border-left:4.2px solid transparent;border-right:4.2px solid transparent;border-bottom:4.2px solid #fff"></i></div></div>
<div class="nm" style="top:481.1px;background:#e6f2f2"><span>GAUTIER Marc</span></div>
<div class="rw" style="top:481.1px">
<div class="dl" style="left:188.85px"></div>
<div class="dl" style="left:378.20px"></div>
<div class="dl" style="left:567.55px"></div>
<div class="dl" style="left:756.90px"></div>
<div class="bar">
<div class="wk" style="left:15.40px;width:101.30px;background:#d22424"></div>
<div class="ln" style="left:76.50px;width:12.00px"><svg style="left:0;top:0" width="10.2" height="16.4" viewBox="0 0 10.2 16.4"><path d="M0.85 1.9h0.9v2.6h0.5v-2.6h0.9v2.6h0.5v-2.6h0.9v3.4c0 1-.5 1.600-1 1.900v7.400h-1.700v-7.400c-.5-.3-1-.9-1-1.900z" fill="#fff"/><path d="M8.400 1.900v12.700h-1.700v-5.100c-.7-.6-1.100-1.500-1.100-2.900v-2.300c0-1.400.9-2.300 2-2.400z" fill="#fff"/></svg></div>
<div class="dv2" style="left:188.05px"></div>
<div class="wk" style="left:204.75px;width:101.30px;background:#d22424"></div>
<div class="ln" style="left:265.85px;width:12.00px"><svg style="left:0;top:0" width="10.2" height="16.4" viewBox="0 0 10.2 16.4"><path d="M0.85 1.9h0.9v2.6h0.5v-2.6h0.9v2.6h0.5v-2.6h0.9v3.4c0 1-.5 1.600-1 1.900v7.400h-1.700v-7.400c-.5-.3-1-.9-1-1.900z" fill="#fff"/><path d="M8.400 1.900v12.700h-1.700v-5.100c-.7-.6-1.100-1.500-1.100-2.900v-2.300c0-1.400.9-2.300 2-2.400z" fill="#fff"/></svg></div>
<div class="dv2" style="left:377.40px"></div>
<div class="wk" style="left:394.10px;width:101.30px;background:#d22424"></div>
<div class="ln" style="left:455.20px;width:12.00px"><svg style="left:0;top:0" width="10.2" height="16.4" viewBox="0 0 10.2 16.4"><path d="M0.85 1.9h0.9v2.6h0.5v-2.6h0.9v2.6h0.5v-2.6h0.9v3.4c0 1-.5 1.600-1 1.900v7.400h-1.700v-7.400c-.5-.3-1-.9-1-1.900z" fill="#fff"/><path d="M8.400 1.900v12.700h-1.700v-5.100c-.7-.6-1.100-1.500-1.100-2.900v-2.300c0-1.400.9-2.300 2-2.400z" fill="#fff"/></svg></div>
<div class="dv2" style="left:566.75px"></div>
<div class="wk" style="left:583.45px;width:101.30px;background:#d22424"></div>
<div class="ln" style="left:644.55px;width:12.00px"><svg style="left:0;top:0" width="10.2" height="16.4" viewBox="0 0 10.2 16.4"><path d="M0.85 1.9h0.9v2.6h0.5v-2.6h0.9v2.6h0.5v-2.6h0.9v3.4c0 1-.5 1.600-1 1.900v7.400h-1.700v-7.400c-.5-.3-1-.9-1-1.900z" fill="#fff"/><path d="M8.400 1.900v12.700h-1.700v-5.100c-.7-.6-1.100-1.500-1.100-2.900v-2.300c0-1.400.9-2.300 2-2.400z" fill="#fff"/></svg></div>
<div class="dv2" style="left:756.10px"></div>
<div class="wk" style="left:772.80px;width:101.30px;background:#d22424"></div>
<div class="ln" style="left:833.90px;width:12.00px"><svg style="left:0;top:0" width="10.2" height="16.4" viewBox="0 0 10.2 16.4"><path d="M0.85 1.9h0.9v2.6h0.5v-2.6h0.9v2.6h0.5v-2.6h0.9v3.4c0 1-.5 1.600-1 1.900v7.400h-1.700v-7.400c-.5-.3-1-.9-1-1.900z" fill="#fff"/><path d="M8.400 1.900v12.700h-1.700v-5.100c-.7-.6-1.100-1.500-1.100-2.900v-2.300c0-1.400.9-2.300 2-2.400z" fill="#fff"/></svg></div>
</div></div>
<svg style="left:520.4px;top:483.40000000000003px" width="14" height="14" viewBox="0 0 14 14"><circle cx="7" cy="7" r="6" fill="rgba(255,255,255,0.45)" stroke="#3a6fa9" stroke-width="1.15"/><text x="7" y="10.75" text-anchor="middle" font-family="DejaVu Serif,Liberation Serif,serif" font-weight="700" font-size="9.6" fill="#0f3c7d">i</text></svg>
<div class="sub" style="top:519.3px"><span style="top:4.1px">Réparateur</span><div style="left:1197.5px;top:0.7px;width:12.5px;height:7.6px;background:#c6c6c6;border:1px solid #b8b8b8"><i style="left:1px;top:0.8px;width:0;height:0;border-left:4.2px solid transparent;border-right:4.2px solid transparent;border-bottom:4.2px solid #fff"></i></div></div>
<div class="nm" style="top:539.6px;background:#e6f2f2"><span>RAMIREZ Juan Manuel</span></div>
<div class="rw" style="top:539.6px">
<div class="dl" style="left:188.85px"></div>
<div class="dl" style="left:378.20px"></div>
<div class="dl" style="left:567.55px"></div>
<div class="dl" style="left:756.90px"></div>
<div class="bar">
<div class="wk" style="left:15.40px;width:101.30px;background:#a97bcc"></div>
<div class="ln" style="left:65.30px;width:12.10px"><svg style="left:0;top:0" width="10.2" height="16.4" viewBox="0 0 10.2 16.4"><path d="M0.85 1.9h0.9v2.6h0.5v-2.6h0.9v2.6h0.5v-2.6h0.9v3.4c0 1-.5 1.600-1 1.900v7.400h-1.700v-7.400c-.5-.3-1-.9-1-1.900z" fill="#fff"/><path d="M8.400 1.900v12.700h-1.700v-5.100c-.7-.6-1.100-1.500-1.100-2.900v-2.300c0-1.400.9-2.300 2-2.400z" fill="#fff"/></svg></div>
<div class="dv2" style="left:188.05px"></div>
<div class="wk" style="left:204.75px;width:101.30px;background:#a97bcc"></div>
<div class="ln" style="left:254.65px;width:12.10px"><svg style="left:0;top:0" width="10.2" height="16.4" viewBox="0 0 10.2 16.4"><path d="M0.85 1.9h0.9v2.6h0.5v-2.6h0.9v2.6h0.5v-2.6h0.9v3.4c0 1-.5 1.600-1 1.900v7.400h-1.700v-7.400c-.5-.3-1-.9-1-1.900z" fill="#fff"/><path d="M8.400 1.900v12.700h-1.700v-5.100c-.7-.6-1.100-1.500-1.100-2.900v-2.300c0-1.400.9-2.300 2-2.400z" fill="#fff"/></svg></div>
<div class="dv2" style="left:377.40px"></div>
<div class="wk" style="left:394.10px;width:101.30px;background:#a97bcc"></div>
<div class="ln" style="left:444.00px;width:12.10px"><svg style="left:0;top:0" width="10.2" height="16.4" viewBox="0 0 10.2 16.4"><path d="M0.85 1.9h0.9v2.6h0.5v-2.6h0.9v2.6h0.5v-2.6h0.9v3.4c0 1-.5 1.600-1 1.900v7.400h-1.700v-7.400c-.5-.3-1-.9-1-1.900z" fill="#fff"/><path d="M8.400 1.900v12.700h-1.700v-5.100c-.7-.6-1.100-1.500-1.100-2.900v-2.300c0-1.400.9-2.300 2-2.400z" fill="#fff"/></svg></div>
<div class="dv2" style="left:566.75px"></div>
<div class="wk" style="left:583.45px;width:101.30px;background:#a97bcc"></div>
<div class="ln" style="left:633.35px;width:12.10px"><svg style="left:0;top:0" width="10.2" height="16.4" viewBox="0 0 10.2 16.4"><path d="M0.85 1.9h0.9v2.6h0.5v-2.6h0.9v2.6h0.5v-2.6h0.9v3.4c0 1-.5 1.600-1 1.900v7.400h-1.700v-7.400c-.5-.3-1-.9-1-1.900z" fill="#fff"/><path d="M8.400 1.900v12.700h-1.700v-5.100c-.7-.6-1.100-1.500-1.100-2.900v-2.300c0-1.400.9-2.300 2-2.400z" fill="#fff"/></svg></div>
<div class="dv2" style="left:756.10px"></div>
<div class="wk" style="left:772.80px;width:101.30px;background:#a97bcc"></div>
<div class="ln" style="left:822.70px;width:12.10px"><svg style="left:0;top:0" width="10.2" height="16.4" viewBox="0 0 10.2 16.4"><path d="M0.85 1.9h0.9v2.6h0.5v-2.6h0.9v2.6h0.5v-2.6h0.9v3.4c0 1-.5 1.600-1 1.900v7.400h-1.700v-7.400c-.5-.3-1-.9-1-1.900z" fill="#fff"/><path d="M8.400 1.900v12.700h-1.700v-5.100c-.7-.6-1.100-1.500-1.100-2.900v-2.300c0-1.400.9-2.300 2-2.400z" fill="#fff"/></svg></div>
</div></div>
<svg style="left:520.4px;top:541.9px" width="14" height="14" viewBox="0 0 14 14"><circle cx="7" cy="7" r="6" fill="rgba(255,255,255,0.45)" stroke="#3a6fa9" stroke-width="1.15"/><text x="7" y="10.75" text-anchor="middle" font-family="DejaVu Serif,Liberation Serif,serif" font-weight="700" font-size="9.6" fill="#0f3c7d">i</text></svg>
<div class="nm" style="top:576px;background:#3399cc;height:32px"><span style="top:2.6px;color:#1f5c97">VERZEROLI Adrien</span></div>
<div class="rw" style="top:576px;height:32px">
<div class="dl" style="left:188.85px"></div>
<div class="dl" style="left:378.20px"></div>
<div class="dl" style="left:567.55px"></div>
<div class="dl" style="left:756.90px"></div>
<div class="bar" style="top:14.3px;height:18px;border-color:#b4b4b4 #a3a3a3 #fff #a3a3a3">
<div class="wk" style="left:15.40px;width:101.30px;background:#ffffff;border-color:#c4c4c4"></div>
<div class="ln" style="left:65.30px;width:12.10px"><svg style="left:0;top:0" width="10.2" height="16.4" viewBox="0 0 10.2 16.4"><path d="M0.85 1.9h0.9v2.6h0.5v-2.6h0.9v2.6h0.5v-2.6h0.9v3.4c0 1-.5 1.600-1 1.900v7.400h-1.700v-7.400c-.5-.3-1-.9-1-1.900z" fill="#fff"/><path d="M8.400 1.900v12.700h-1.700v-5.100c-.7-.6-1.100-1.500-1.100-2.900v-2.300c0-1.400.9-2.300 2-2.400z" fill="#fff"/></svg></div>
<div class="dv2" style="left:188.05px"></div>
<div class="wk" style="left:204.75px;width:101.30px;background:#ffffff;border-color:#c4c4c4"></div>
<div class="ln" style="left:254.65px;width:12.10px"><svg style="left:0;top:0" width="10.2" height="16.4" viewBox="0 0 10.2 16.4"><path d="M0.85 1.9h0.9v2.6h0.5v-2.6h0.9v2.6h0.5v-2.6h0.9v3.4c0 1-.5 1.600-1 1.900v7.400h-1.700v-7.400c-.5-.3-1-.9-1-1.900z" fill="#fff"/><path d="M8.400 1.900v12.700h-1.700v-5.100c-.7-.6-1.100-1.500-1.100-2.900v-2.300c0-1.400.9-2.300 2-2.400z" fill="#fff"/></svg></div>
<div class="dv2" style="left:377.40px"></div>
<div class="wk" style="left:394.10px;width:101.30px;background:#ffffff;border-color:#c4c4c4"></div>
<div class="ln" style="left:444.00px;width:12.10px"><svg style="left:0;top:0" width="10.2" height="16.4" viewBox="0 0 10.2 16.4"><path d="M0.85 1.9h0.9v2.6h0.5v-2.6h0.9v2.6h0.5v-2.6h0.9v3.4c0 1-.5 1.600-1 1.900v7.400h-1.700v-7.400c-.5-.3-1-.9-1-1.900z" fill="#fff"/><path d="M8.400 1.900v12.700h-1.700v-5.100c-.7-.6-1.100-1.500-1.100-2.900v-2.300c0-1.400.9-2.300 2-2.400z" fill="#fff"/></svg></div>
<div class="dv2" style="left:566.75px"></div>
<div class="wk" style="left:583.45px;width:101.30px;background:#ffffff;border-color:#c4c4c4"></div>
<div class="ln" style="left:633.35px;width:12.10px"><svg style="left:0;top:0" width="10.2" height="16.4" viewBox="0 0 10.2 16.4"><path d="M0.85 1.9h0.9v2.6h0.5v-2.6h0.9v2.6h0.5v-2.6h0.9v3.4c0 1-.5 1.600-1 1.900v7.400h-1.700v-7.400c-.5-.3-1-.9-1-1.900z" fill="#fff"/><path d="M8.400 1.900v12.700h-1.700v-5.100c-.7-.6-1.100-1.500-1.100-2.900v-2.300c0-1.400.9-2.300 2-2.400z" fill="#fff"/></svg></div>
<div class="dv2" style="left:756.10px"></div>
<div class="wk" style="left:772.80px;width:101.30px;background:#ffffff;border-color:#c4c4c4"></div>
<div class="ln" style="left:822.70px;width:12.10px"><svg style="left:0;top:0" width="10.2" height="16.4" viewBox="0 0 10.2 16.4"><path d="M0.85 1.9h0.9v2.6h0.5v-2.6h0.9v2.6h0.5v-2.6h0.9v3.4c0 1-.5 1.600-1 1.900v7.400h-1.700v-7.400c-.5-.3-1-.9-1-1.900z" fill="#fff"/><path d="M8.400 1.900v12.700h-1.700v-5.100c-.7-.6-1.100-1.500-1.100-2.900v-2.300c0-1.400.9-2.300 2-2.400z" fill="#fff"/></svg></div>
</div></div>
<svg style="left:520.4px;top:578.3px" width="14" height="14" viewBox="0 0 14 14"><circle cx="7" cy="7" r="6" fill="none" stroke="#3a6fa9" stroke-width="1.15"/><circle cx="7" cy="7" r="6.6" fill="none" stroke="#fff" stroke-width="0.7" stroke-dasharray="1 1"/><text x="7" y="10.75" text-anchor="middle" font-family="DejaVu Serif,Liberation Serif,serif" font-weight="700" font-size="9.6" fill="#0f3c7d">i</text></svg>
<div style="left:536.6px;top:574.5px;width:948px;height:35.7px;border:2.1px solid #2a90cf"></div>
<div style="left:409.3px;top:585.5px;width:68.7px;height:13.8px;border:1px dotted rgba(210,232,246,0.5)"><div style="left:0.5px;top:0.3px;width:8.2px;height:9.2px;border-radius:2.2px;background:#7a78cc;border:0.6px solid #8a8ab8"></div><span style="left:15.1px;top:0.2px;font-size:7.75px;line-height:10px;color:#d2e9f7;-webkit-text-stroke:0.2px #d2e9f7">Réparateur</span></div>
<svg style="left:402px;top:590.5px" width="12" height="17" viewBox="0 0 12 17"><path d="M1.300 1.300v12.200l2.900-2.600 2 4.700 1.900-.8-2-4.600h4z" fill="#fff" stroke="#111" stroke-width="1" stroke-linejoin="round"/></svg>
</body></html>
